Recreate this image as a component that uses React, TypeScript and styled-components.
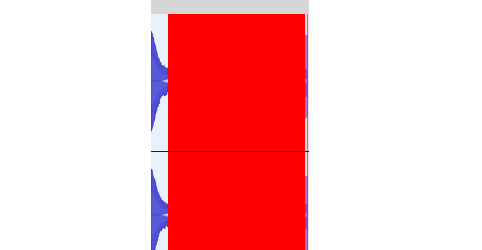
import React from "react";
import styled, { createGlobalStyle } from "styled-components";

const Global = createGlobalStyle`
  html, body { margin: 0; padding: 0; background: #ffffff; }
  body { font-family: "Liberation Sans", Arial, sans-serif; }
`;

const Page = styled.div`
  display: flex;
  flex-direction: row;
  padding-left: 151px;
  height: 250px;
  overflow: hidden;
`;

const Editor = styled.div`
  display: flex;
  flex-direction: column;
  width: 158px;
`;

const Ruler = styled.div`
  height: 14px;
  background: #d6d6d6;
  flex: none;
`;

const Track = styled.div<{ $h: number; $border?: boolean }>`
  display: grid;
  grid-template-columns: 17px 137px 4px;
  grid-template-rows: 100%;
  height: ${(p) => p.$h}px;
  flex: none;
  background: #e9f1fd;
  border-bottom: ${(p) => (p.$border ? "1px solid #1e1e1e" : "none")};
  overflow: hidden;
`;

const Wave = styled.svg`
  grid-row: 1;
  grid-column: 1 / 4;
  display: block;
  width: 158px;
  height: 100%;
`;

const Selection = styled.div`
  grid-row: 1;
  grid-column: 2;
  background: #ff0000;
`;

const EdgeTint = styled.div`
  grid-row: 1;
  grid-column: 3;
  background:
    linear-gradient(
      to right,
      transparent 2px,
      rgba(230, 60, 80, 0.7) 2px,
      rgba(230, 60, 80, 0.7) 3px,
      transparent 3px
    ),
    rgba(255, 60, 100, 0.18);
`;

function rnd(seed: number) {
  const s = Math.sin(seed * 12.9898) * 43758.5453;
  return s - Math.floor(s);
}

// outer envelope half-height as a function of x (0..17)
function env(x: number) {
  const pts: [number, number][] = [
    [0, 50],
    [1.5, 46],
    [3, 40],
    [5, 32],
    [7, 24],
    [9, 18],
    [11, 15],
    [14, 13],
    [17, 12],
  ];
  for (let i = 0; i < pts.length - 1; i++) {
    const [x0, y0] = pts[i];
    const [x1, y1] = pts[i + 1];
    if (x >= x0 && x <= x1) return y0 + ((y1 - y0) * (x - x0)) / (x1 - x0);
  }
  return 12;
}

function gap(x: number) {
  if (x < 9) return 0;
  return Math.min(2.2, ((x - 9) / 8) * 2.2);
}

function wavePath(c: number, k: number, seed: number) {
  const top: string[] = [];
  const bot: string[] = [];
  for (let x = 0; x <= 17; x += 0.5) {
    const n1 = (rnd(seed + x * 7.1) - 0.5) * 4 * k;
    const n2 = (rnd(seed + x * 3.3 + 50) - 0.5) * 4 * k;
    top.push(`${x},${(c - env(x) * k + n1).toFixed(2)}`);
    bot.push(`${x},${(c + env(x) * k + n2).toFixed(2)}`);
  }
  const upper: string[] = [];
  const lower: string[] = [];
  for (let x = 0; x <= 17; x += 0.5) {
    const g = gap(x) * k;
    upper.push(`${x},${(c - g).toFixed(2)}`);
    lower.push(`${x},${(c + g).toFixed(2)}`);
  }
  const upperShape = `M${top.join(" L")} L${upper.reverse().join(" L")} Z`;
  const lowerShape = `M${lower.join(" L")} L${bot.reverse().join(" L")} Z`;
  return [upperShape, lowerShape];
}

function WaveForm({ h, c, k, seed, rTop, rBot }: { h: number; c: number; k: number; seed: number; rTop: number; rBot: number }) {
  const [a, b] = wavePath(c, k, seed);
  const inner = () => {
    const r: string[] = [];
    for (let x = 0; x <= 17; x += 0.5) r.push(`${x},${(c - env(x) * k * 0.5).toFixed(2)}`);
    const s: string[] = [];
    for (let x = 17; x >= 0; x -= 0.5) s.push(`${x},${(c + env(x) * k * 0.5).toFixed(2)}`);
    return `M${r.join(" L")} L${s.join(" L")} Z`;
  };
  return (
    <Wave viewBox={`0 0 158 ${h}`} preserveAspectRatio="none">
      <path d={a} fill="#4f4fd8" stroke="#3030c2" strokeWidth="0.8" />
      <path d={b} fill="#4f4fd8" stroke="#3030c2" strokeWidth="0.8" />
      <path d={inner()} fill="#7070e4" opacity="0.3" />
      <rect x="154" y={rTop} width="3" height={rBot - rTop} fill="#9a7ddc" />
      <rect x="154" y={c - 12 * k} width="3" height={10 * k} fill="#6c4cc8" />
      <rect x="154" y={c + 2 * k} width="3" height={14 * k} fill="#6c4cc8" />
    </Wave>
  );
}

export default function App() {
  return (
    <>
      <Global />
      <Page>
        <Editor>
          <Ruler />
          <Track $h={137} $border>
            <WaveForm h={137} c={67} k={1} seed={3} rTop={21} rBot={104} />
            <Selection />
            <EdgeTint />
          </Track>
          <Track $h={126}>
            <WaveForm h={126} c={63} k={0.92} seed={11} rTop={24} rBot={102} />
            <Selection />
            <EdgeTint />
          </Track>
        </Editor>
      </Page>
    </>
  );
}
